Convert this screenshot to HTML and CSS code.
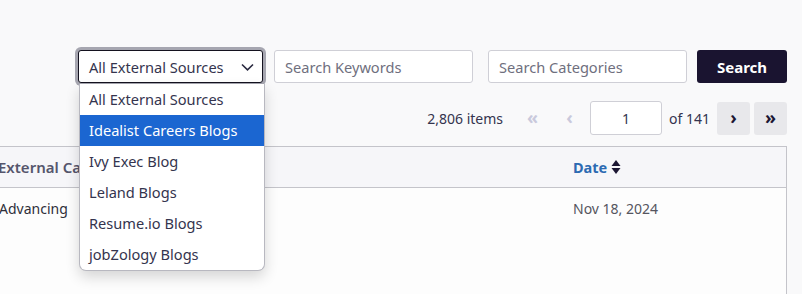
FILE: index.html
```html
<!DOCTYPE html>
<html lang="en">
<head>
  <meta charset="UTF-8">
  <title>External Sources</title>
  <link rel="stylesheet" href="styles.css">
</head>
<body>
  <div class="page">
    <div class="filters">
      <div class="select-wrap">
        <div class="select">
          <span>All External Sources</span>
          <svg class="chevron" width="13" height="8" viewBox="0 0 13 8"><polyline points="1,1.5 6.5,6.8 12,1.5" fill="none" stroke="#2a2a40" stroke-width="1.6"/></svg>
        </div>
        <ul class="options">
          <li>All External Sources</li>
          <li class="active">Idealist Careers Blogs</li>
          <li>Ivy Exec Blog</li>
          <li>Leland Blogs</li>
          <li>Resume.io Blogs</li>
          <li>jobZology Blogs</li>
        </ul>
      </div>
      <input class="field keywords" type="text" placeholder="Search Keywords">
      <input class="field categories" type="text" placeholder="Search Categories">
      <button class="search-btn">Search</button>
    </div>

    <div class="pager">
      <span class="count">2,806 items</span>
      <button class="page-btn disabled">&laquo;</button>
      <button class="page-btn disabled">&lsaquo;</button>
      <input class="page-input" type="text" value="1">
      <span class="of">of 141</span>
      <button class="page-btn">&rsaquo;</button>
      <button class="page-btn">&raquo;</button>
    </div>

    <div class="table-wrap">
      <table class="grid">
        <thead>
          <tr>
            <th class="col-title">Title</th>
            <th class="col-cat">External Category</th>
            <th class="col-date">
              <span class="sort">Date
                <svg width="10" height="16" viewBox="0 0 10 16"><polygon points="5,1 9.5,7 0.5,7" fill="#1c1633"/><polygon points="0.5,9 9.5,9 5,15" fill="#1c1633"/></svg>
              </span>
            </th>
          </tr>
        </thead>
        <tbody>
          <tr>
            <td>How to Ask for a Raise</td>
            <td>Advancing</td>
            <td class="date">Nov 18, 2024</td>
          </tr>
        </tbody>
      </table>
    </div>
  </div>
</body>
</html>
```

FILE: styles.css
```css
body {
  margin: 0;
  background: #f9f9fa;
  font-family: "Noto Sans", "Open Sans", sans-serif;
  font-size: 14px;
  color: #34344e;
  overflow: hidden;
}

.page {
  padding: 50px 15px 0 0;
}

.filters {
  display: flex;
  justify-content: flex-end;
  align-items: center;
  height: 33px;
  font-size: 14.6px;
}

.select-wrap {
  position: relative;
  margin-right: 11px;
}

.select {
  box-sizing: border-box;
  width: 185px;
  height: 33px;
  border: 1px solid #14121f;
  border-radius: 3px;
  background: #fff;
  box-shadow: 0 0 0 3px #a6a6b0;
  display: flex;
  align-items: center;
  justify-content: space-between;
  padding: 0 8px 0 10px;
}

.options {
  position: absolute;
  top: 34px;
  left: 1px;
  width: 184px;
  margin: 0;
  padding: 0;
  list-style: none;
  background: #fff;
  border: 1px solid #b8b8c0;
  border-top: none;
  border-radius: 0 0 7px 7px;
  box-shadow: 0 6px 14px rgba(0, 0, 0, 0.16);
  overflow: hidden;
  z-index: 5;
}

.options li {
  height: 31px;
  line-height: 31px;
  padding-left: 9px;
}

.options li.active {
  background: #1b66d1;
  color: #fff;
}

.field {
  box-sizing: border-box;
  width: 199px;
  height: 33px;
  border: 1px solid #cfcfd6;
  border-radius: 3px;
  background: #fff;
  padding: 0 10px;
  font: inherit;
  color: #34344e;
}

.field::placeholder {
  color: #6f6f7e;
}

.keywords {
  margin-right: 15px;
}

.search-btn {
  box-sizing: border-box;
  margin-left: 10px;
  width: 90px;
  height: 33px;
  border: none;
  border-radius: 3px;
  background: #1a1430;
  color: #fff;
  font: inherit;
  font-size: 15px;
  font-weight: 700;
}

.pager {
  display: flex;
  justify-content: flex-end;
  align-items: center;
  gap: 4px;
  margin-top: 18px;
  height: 34px;
}

.count {
  margin-right: 9px;
}

.page-btn {
  width: 33px;
  height: 33px;
  border: none;
  border-radius: 3px;
  background: #e8e8eb;
  color: #1c1633;
  font: inherit;
  font-size: 18px;
  font-weight: 700;
  line-height: 1;
  padding: 0 0 3px;
}

.page-btn.disabled {
  background: transparent;
  color: #c9c9dc;
}

.page-input {
  box-sizing: border-box;
  width: 72px;
  height: 34px;
  border: 1px solid #cfcfd6;
  border-radius: 3px;
  background: #fff;
  text-align: center;
  font: inherit;
  color: #34344e;
}

.of {
  margin: 0 3px;
}

.table-wrap {
  margin: 11px 0 0 -219px;
  border: 1px solid #c4c4ca;
  border-bottom: none;
  background: #fdfdfd;
}

.grid {
  width: 100%;
  border-collapse: collapse;
  table-layout: fixed;
}

.grid th {
  height: 40px;
  padding: 0 12px;
  text-align: left;
  background: #f6f6f9;
  border-bottom: 1px solid #c4c4ca;
  color: #55556c;
  font-size: 15px;
  font-weight: 600;
  white-space: nowrap;
  overflow: hidden;
}

.col-title {
  width: 180px;
}

.col-cat {
  width: 551px;
}

.sort {
  color: #2c6ab2;
  font-size: 14.5px;
  font-weight: 700;
  display: inline-flex;
  align-items: center;
  gap: 4px;
}

.grid td {
  height: 110px;
  padding: 11px 12px 11px 13px;
  vertical-align: top;
  color: #2f2f3a;
}

.grid td.date {
  padding-left: 12px;
  color: #55555f;
}
```
